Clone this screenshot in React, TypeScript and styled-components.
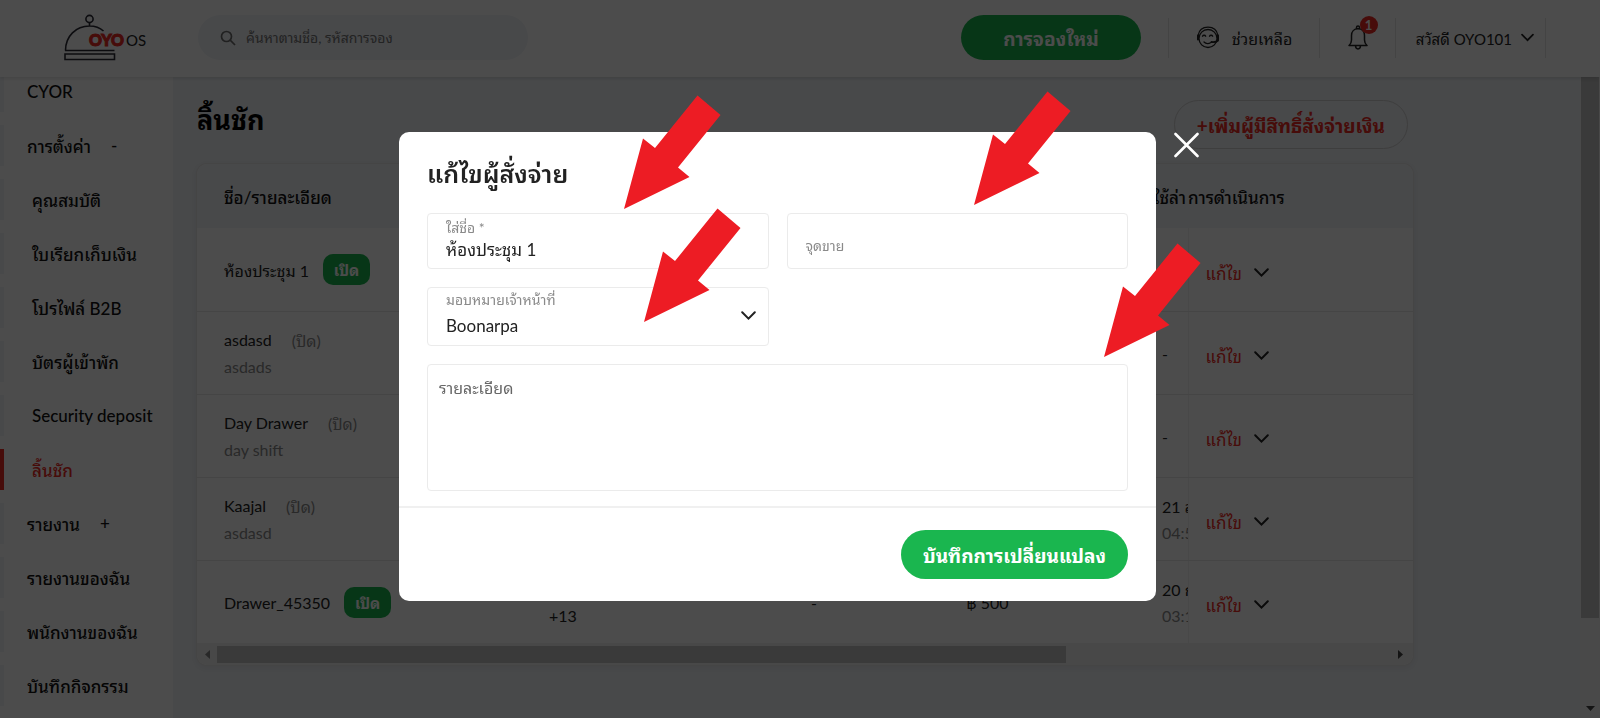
import React from 'react';
import styled, { createGlobalStyle, css } from 'styled-components';

const fonts = "Lato, 'Noto Sans Thai Looped', 'Noto Sans Thai', 'Noto Sans', sans-serif";

const GlobalStyle = createGlobalStyle`
  *, *::before, *::after { box-sizing: border-box; }
  body { margin: 0; background: #f1f4f8; color: #222; font-family: ${fonts}; font-size: 16px; }
  button, input, select, textarea { font-family: inherit; margin: 0; }
  button { cursor: pointer; }
  h1, h2, ul { margin: 0; padding: 0; }
`;

/* ---------- page shell ---------- */

const Shell = styled.div`
  display: flex;
  flex-direction: column;
  height: 100vh;
  overflow: hidden;
`;

const Header = styled.header`
  display: flex;
  align-items: center;
  flex: none;
  height: 77px;
  padding: 0 54px 2px 0;
  background: #fff;
  box-shadow: 0 1px 4px rgba(0, 0, 0, 0.15);
  z-index: 1;
`;

const LogoLink = styled.a`
  display: flex;
  width: 198px;
  padding-left: 64px;
`;

const Search = styled.label`
  display: flex;
  align-items: center;
  gap: 10px;
  width: 330px;
  height: 45px;
  padding: 0 22px;
  border-radius: 23px;
  background: #f1f4f8;
`;

const SearchInput = styled.input`
  flex: 1;
  min-width: 0;
  border: 0;
  padding: 0;
  outline: 0;
  background: transparent;
  font-size: 14px;
  color: #222;
  &::placeholder { color: #757575; opacity: 1; }
`;

const HeaderTools = styled.div`
  display: flex;
  align-items: center;
  height: 40px;
  margin-left: auto;
`;

const Pill = styled.button<{ $tone: 'solid' | 'outline'; $tall?: boolean }>`
  height: ${p => (p.$tall ? 49 : 45)}px;
  padding: 0 22px;
  border-radius: 25px;
  font-size: 19px;
  font-weight: 700;
  white-space: nowrap;
  ${p =>
    p.$tone === 'solid'
      ? css`border: 0; background: #1ab64f; color: #fff;`
      : css`border: 1px solid #cfcfcf; background: transparent; color: #ee2a24;`}
`;

const BookingSlot = styled.div`
  display: grid;
  width: 180px;
  margin-right: 27px;
`;

const Tool = styled.button<{ $width: number; $gap?: number }>`
  display: flex;
  align-items: center;
  justify-content: center;
  gap: ${p => p.$gap ?? 0}px;
  width: ${p => p.$width}px;
  height: 40px;
  padding: 0;
  border: 0;
  border-left: 1px solid #e4e4e4;
  background: transparent;
  font-size: 16px;
  color: #222;
  white-space: nowrap;
  &:last-child {
    justify-content: flex-end;
    padding-right: 11px;
    border-right: 1px solid #e4e4e4;
    font-size: 15px;
  }
`;

const BellWrap = styled.span`
  position: relative;
  display: flex;
`;

const Count = styled.span`
  position: absolute;
  top: -9px;
  right: -10px;
  width: 18px;
  height: 18px;
  border-radius: 50%;
  background: #ee2a24;
  color: #fff;
  font-size: 13px;
  font-weight: 700;
  line-height: 18px;
  text-align: center;
`;

const Body = styled.div`
  display: flex;
  flex: 1;
  min-height: 0;
`;

/* ---------- sidebar ---------- */

const Sidebar = styled.nav`
  flex: none;
  width: 173px;
  overflow: hidden;
  background: #fff;
`;

const MenuList = styled.ul`
  display: flex;
  flex-direction: column;
  gap: 13px;
  margin-top: -6px;
  list-style: none;
`;

const MenuLink = styled.a<{ $sub?: boolean; $active?: boolean }>`
  display: flex;
  align-items: center;
  gap: 20px;
  height: 41px;
  padding-left: ${p => (p.$sub ? 28 : 23)}px;
  border-left: 4px solid ${p => (p.$active ? '#ee2a24' : '#f1f4f8')};
  color: ${p => (p.$active ? '#ee2a24' : '#111')};
  font-size: 17px;
  font-weight: 500;
  text-decoration: none;
  white-space: nowrap;
`;

/* ---------- main ---------- */

const Main = styled.main`
  flex: 1;
  min-width: 0;
  padding: 23px 24px 0;
`;

const TitleRow = styled.div`
  display: flex;
  justify-content: space-between;
  align-items: flex-start;
  max-width: 1211px;
  margin-bottom: 15px;
`;

const PageTitle = styled.h1`
  font-size: 27px;
  line-height: 40px;
  font-weight: 700;
  color: #000;
`;

const Card = styled.section`
  max-width: 1216px;
  overflow: hidden;
  border-radius: 10px;
  background: #fff;
  box-shadow: 0 0 0 1px #e6e6e6, 0 2px 6px 2px rgba(0, 0, 0, 0.05);
`;

const Table = styled.table`
  width: 100%;
  table-layout: fixed;
  border-collapse: collapse;
`;

const Th = styled.th<{ $first?: boolean; $end?: boolean }>`
  height: 64px;
  padding: 0 ${p => (p.$end ? 2 : 0)}px 0 ${p => (p.$first ? 27 : 0)}px;
  background: #f1f4f8;
  color: #111;
  font-size: 17px;
  font-weight: 500;
  text-align: ${p => (p.$end ? 'right' : 'left')};
  white-space: nowrap;
`;

const Td = styled.td<{ $first?: boolean; $action?: boolean }>`
  height: 83px;
  padding: ${p => (p.$action ? 6 : 1)}px 0 0 ${p => (p.$first ? 27 : p.$action ? 17 : 0)}px;
  border-bottom: 1px solid #e6e6e6;
  border-left: ${p => (p.$action ? '1px solid #f2f2f2' : '0')};
  overflow: hidden;
  white-space: nowrap;
  tr:last-child & { border-bottom: 0; }
`;

const Line = styled.div<{ $muted?: boolean }>`
  display: flex;
  align-items: center;
  gap: 14px;
  height: 27px;
  color: ${p => (p.$muted ? '#8a8a8a' : '#222')};
`;

const Closed = styled.span`
  margin-left: 6px;
  color: #8a8a8a;
`;

const OpenBadge = styled.span`
  width: 47px;
  height: 31px;
  border-radius: 10px;
  background: #1ab64f;
  color: #fff;
  font-size: 15px;
  font-weight: 700;
  line-height: 32px;
  text-align: center;
`;

const EditButton = styled.button`
  display: flex;
  align-items: center;
  gap: 12px;
  padding: 0;
  border: 0;
  background: transparent;
  font-size: 17px;
  color: #ee2a24;
  svg { color: #222; }
`;

const HScroll = styled.div`
  display: flex;
  align-items: center;
  justify-content: space-between;
  height: 22px;
  padding: 0 8px 0 6px;
  background: #f1f1f1;
`;

const HTrack = styled.div`
  flex: 1;
  padding-left: 5px;
`;

const HThumb = styled.div`
  width: 72%;
  height: 17px;
  background: #c1c1c1;
`;

const VScroll = styled.div`
  display: flex;
  flex-direction: column;
  justify-content: space-between;
  align-items: center;
  flex: none;
  width: 20px;
  padding-bottom: 5px;
  background: #f6f6f6;
`;

const VThumb = styled.div`
  width: 18px;
  height: 85%;
  background: #c1c1c1;
`;

/* ---------- dialog ---------- */

const Overlay = styled.div`
  position: fixed;
  inset: 0;
  z-index: 10;
  display: flex;
  justify-content: center;
  align-items: flex-start;
  gap: 18px;
  padding-top: 132px;
  background: rgba(0, 0, 0, 0.7);
`;

const Dialog = styled.form`
  position: relative;
  width: 757px;
  border-radius: 10px;
  background: #fff;
`;

const DialogBody = styled.div`
  padding: 21px 28px 15px;
`;

const DialogTitle = styled.h2`
  margin-bottom: 20px;
  font-size: 25px;
  line-height: 40px;
  font-weight: 600;
`;

const Fields = styled.div`
  display: grid;
  grid-template-columns: 1fr 1fr;
  gap: 18px;
`;

const Field = styled.label<{ $tall?: boolean }>`
  position: relative;
  display: flex;
  flex-direction: column;
  height: ${p => (p.$tall ? 59 : 56)}px;
  padding: ${p => (p.$tall ? 2 : 4)}px 18px 0;
  border: 1px solid #ebebeb;
  border-radius: 4px;
`;

const FieldLabel = styled.span`
  flex: none;
  height: 20px;
  font-size: 14px;
  line-height: 20px;
  color: #8a8a8a;
`;

const controlText = css`
  width: 100%;
  padding: 0;
  border: 0;
  outline: 0;
  background: transparent;
  color: #222;
`;

const FieldInput = styled.input`
  ${controlText}
  height: 28px;
  margin-top: -4px;
  font-size: 17px;
`;

const PlainInput = styled.input`
  ${controlText}
  height: 100%;
  padding-top: 5px;
  font-size: 14px;
  &::placeholder { color: #8a8a8a; opacity: 1; }
`;

const FieldSelect = styled.select`
  ${controlText}
  height: 24px;
  margin-top: 3px;
  font-size: 17px;
  appearance: none;
`;

const SelectMark = styled.span`
  position: absolute;
  right: 12px;
  top: 20px;
  display: flex;
  pointer-events: none;
`;

const Details = styled.textarea`
  display: block;
  width: 100%;
  height: 127px;
  margin-top: 18px;
  padding: 13px 11px;
  border: 1px solid #ebebeb;
  border-radius: 4px;
  outline: 0;
  resize: none;
  font-size: 16px;
  line-height: 20px;
  &::placeholder { color: #666; opacity: 1; }
`;

const DialogFooter = styled.footer`
  display: flex;
  justify-content: flex-end;
  padding: 22px 28px;
  border-top: 2px solid #f0f0f0;
`;

const CloseButton = styled.button`
  width: 27px;
  padding: 0;
  border: 0;
  background: transparent;
  color: #fff;
`;

const Pointer = styled.svg<{ $x: number; $y: number }>`
  position: absolute;
  left: ${p => p.$x}px;
  top: ${p => p.$y}px;
  width: 97px;
  height: 114px;
  pointer-events: none;
`;

/* ---------- icons ---------- */

const Chevron = ({ size = 15 }: { size?: number }) => (
  <svg width={size} height={size} viewBox="0 0 15 15" fill="none" stroke="currentColor" strokeWidth="2" strokeLinecap="round">
    <path d="M1.200 4.200 7.500 10.600 13.800 4.200" />
  </svg>
);

const Triangle = ({ dir }: { dir: 'left' | 'right' | 'down' }) => (
  <svg width="9" height="9" viewBox="0 0 9 9" fill={dir === 'left' ? '#888' : '#444'}>
    <path d={dir === 'left' ? 'M7 0v9L2 4.500z' : dir === 'right' ? 'M2 0v9l5-4.500z' : 'M0 2h9L4.500 7z'} />
  </svg>
);

const Logo = () => (
  <svg width="84" height="50" viewBox="64 13 84 50" role="img" aria-label="OYO OS">
    <g fill="none" stroke="#2b2b35" strokeWidth="1.600">
      <circle cx="89.500" cy="19" r="3.600" />
      <path d="M89.500 22.500v3.500M65.500 50.500C65.500 36 76 26 89.500 26c6 0 10.500 1.800 14 5M65 50.500h49.500M65 54h49.500v5.500H65z" />
    </g>
    <text x="89" y="46" fontFamily="Lato, sans-serif" fontSize="16" fontWeight="900" fill="#ee2a24" stroke="#ee2a24" strokeWidth="1">OYO</text>
    <text x="126" y="46" fontFamily="Lato, sans-serif" fontSize="15" fill="#222">OS</text>
  </svg>
);

const SearchIcon = () => (
  <svg width="16" height="16" viewBox="0 0 16 16" fill="none" stroke="#6d6d6d" strokeWidth="1.700">
    <circle cx="6.500" cy="6.500" r="5" />
    <path d="M10.200 10.200 15 15" />
  </svg>
);

const HelpIcon = () => (
  <svg width="24" height="24" viewBox="0 0 24 24" fill="none" stroke="#222" strokeWidth="1.300" strokeLinecap="round">
    <circle cx="12" cy="12.500" r="9" />
    <path d="M2 9.500C3 4.300 7 1.200 12 1.200s9 3.100 10 8.300" />
    <path d="M2 9.500v4M22 9.500v4" strokeWidth="2" />
    <path d="M6.500 10.200c.6-1.300 2.600-1.300 3.200 0M13.500 10.200c.6-1.300 2.600-1.300 3.200 0M8 16c1.800 1.800 4.500 2 7 .5" />
    <path d="M22 14.500c-1.500 1.500-3.500 1.800-6.500 1.500" strokeWidth="1.900" />
  </svg>
);

const BellIcon = () => (
  <svg width="20" height="26" viewBox="0 0 20 26" fill="none" stroke="#222" strokeWidth="1.500" strokeLinejoin="round">
    <path d="M8.500 3.800V2.500a1.500 1.500 0 0 1 3 0v1.300M1 20.500c1.800-1.500 2.500-3 2.500-5.500v-4.500c0-4 2.500-6.700 6.500-6.700s6.500 2.700 6.500 6.700V15c0 2.500.7 4 2.500 5.500zM7.500 20.500c0 4.500 5 4.500 5 0" />
  </svg>
);

const CloseIcon = () => (
  <svg width="27" height="27" viewBox="0 0 27 27" fill="none" stroke="currentColor" strokeWidth="2.600" strokeLinecap="round">
    <path d="M1.500 2 23.500 24M23.500 2 1.500 24" />
  </svg>
);

/* ---------- data ---------- */

const menu = [
  { label: 'CYOR' },
  { label: 'การตั้งค่า', mark: '-' },
  { label: 'คุณสมบัติ', sub: true },
  { label: 'ใบเรียกเก็บเงิน', sub: true },
  { label: 'โปรไฟล์ B2B', sub: true },
  { label: 'บัตรผู้เข้าพัก', sub: true },
  { label: 'Security deposit', sub: true },
  { label: 'ลิ้นชัก', sub: true, active: true },
  { label: 'รายงาน', mark: '+' },
  { label: 'รายงานของฉัน' },
  { label: 'พนักงานของฉัน' },
  { label: 'บันทึกกิจกรรม' },
];

type Drawer = {
  name: string;
  detail?: string;
  open?: boolean;
  more?: string;
  shift?: string;
  amount?: string;
  date?: string;
  time?: string;
};

const drawers: Drawer[] = [
  { name: 'ห้องประชุม 1', open: true },
  { name: 'asdasd', detail: 'asdads', date: '-' },
  { name: 'Day Drawer', detail: 'day shift', date: '-' },
  { name: 'Kaajal', detail: 'asdasd', date: '21 ส.ค.', time: '04:55' },
  { name: 'Drawer_45350', open: true, more: '+13', shift: '-', amount: '฿ 500', date: '20 ก.ค.', time: '03:15' },
];

const pointers = [
  { x: 225, y: -37 },
  { x: 245, y: 76 },
  { x: 575, y: -41 },
  { x: 705, y: 111 },
];

export default function App() {
  return (
    <>
      <GlobalStyle />
      <Shell>
        <Header>
          <LogoLink href="#"><Logo /></LogoLink>
          <Search>
            <SearchIcon />
            <SearchInput type="search" placeholder="ค้นหาตามชื่อ, รหัสการจอง" />
          </Search>
          <HeaderTools>
            <BookingSlot><Pill $tone="solid">การจองใหม่</Pill></BookingSlot>
            <Tool $width={151} $gap={12}><HelpIcon />ช่วยเหลือ</Tool>
            <Tool $width={76}>
              <BellWrap><BellIcon /><Count>1</Count></BellWrap>
            </Tool>
            <Tool $width={151} $gap={9}>สวัสดี OYO101 <Chevron size={13} /></Tool>
          </HeaderTools>
        </Header>
        <Body>
          <Sidebar>
            <MenuList>
              {menu.map(item => (
                <li key={item.label}>
                  <MenuLink href="#" $sub={item.sub} $active={item.active}>
                    {item.label}
                    {item.mark && <span>{item.mark}</span>}
                  </MenuLink>
                </li>
              ))}
            </MenuList>
          </Sidebar>
          <Main>
            <TitleRow>
              <PageTitle>ลิ้นชัก</PageTitle>
              <Pill $tone="outline" $tall>+เพิ่มผู้มีสิทธิ์สั่งจ่ายเงิน</Pill>
            </TitleRow>
            <Card>
              <Table>
                <colgroup>
                  <col />
                  <col style={{ width: 262 }} />
                  <col style={{ width: 155 }} />
                  <col style={{ width: 196 }} />
                  <col style={{ width: 26 }} />
                  <col style={{ width: 225 }} />
                </colgroup>
                <thead>
                  <tr>
                    <Th $first>ชื่อ/รายละเอียด</Th>
                    <Th colSpan={2} />
                    <Th colSpan={2} $end>ใช้ล่า</Th>
                    <Th>การดำเนินการ</Th>
                  </tr>
                </thead>
                <tbody>
                  {drawers.map(d => (
                    <tr key={d.name}>
                      <Td $first>
                        <Line>
                          {d.name}
                          {d.open ? <OpenBadge>เปิด</OpenBadge> : <Closed>(ปิด)</Closed>}
                        </Line>
                        {d.detail && <Line $muted>{d.detail}</Line>}
                      </Td>
                      <Td>{d.more && <><Line /><Line>{d.more}</Line></>}</Td>
                      <Td>{d.shift}</Td>
                      <Td>{d.amount}</Td>
                      <Td>
                        {d.date && <Line>{d.date}</Line>}
                        {d.time && <Line $muted>{d.time}</Line>}
                      </Td>
                      <Td $action>
                        <EditButton>แก้ไข <Chevron /></EditButton>
                      </Td>
                    </tr>
                  ))}
                </tbody>
              </Table>
              <HScroll>
                <Triangle dir="left" />
                <HTrack><HThumb /></HTrack>
                <Triangle dir="right" />
              </HScroll>
            </Card>
          </Main>
          <VScroll>
            <VThumb />
            <Triangle dir="down" />
          </VScroll>
        </Body>
      </Shell>

      <Overlay>
        <Dialog role="dialog" aria-labelledby="dialog-title" onSubmit={e => e.preventDefault()}>
          <DialogBody>
            <DialogTitle id="dialog-title">แก้ไขผู้สั่งจ่าย</DialogTitle>
            <Fields>
              <Field>
                <FieldLabel>ใส่ชื่อ *</FieldLabel>
                <FieldInput type="text" defaultValue="ห้องประชุม 1" />
              </Field>
              <Field>
                <PlainInput type="text" placeholder="จุดขาย" aria-label="จุดขาย" />
              </Field>
              <Field $tall>
                <FieldLabel>มอบหมายเจ้าหน้าที่</FieldLabel>
                <FieldSelect defaultValue="Boonarpa">
                  <option>Boonarpa</option>
                </FieldSelect>
                <SelectMark><Chevron /></SelectMark>
              </Field>
            </Fields>
            <Details placeholder="รายละเอียด" aria-label="รายละเอียด" />
          </DialogBody>
          <DialogFooter>
            <Pill $tone="solid" $tall type="submit">บันทึกการเปลี่ยนแปลง</Pill>
          </DialogFooter>
          {pointers.map(p => (
            <Pointer key={p.x} $x={p.x} $y={p.y} viewBox="0 0 97 114" aria-hidden="true">
              <path fill="#ed1c24" d="M0 114 19 43.500 31 53 73.500.500 96.500 20 54 72.500 65.500 82z" />
            </Pointer>
          ))}
        </Dialog>
        <CloseButton aria-label="ปิด"><CloseIcon /></CloseButton>
      </Overlay>
    </>
  );
}
